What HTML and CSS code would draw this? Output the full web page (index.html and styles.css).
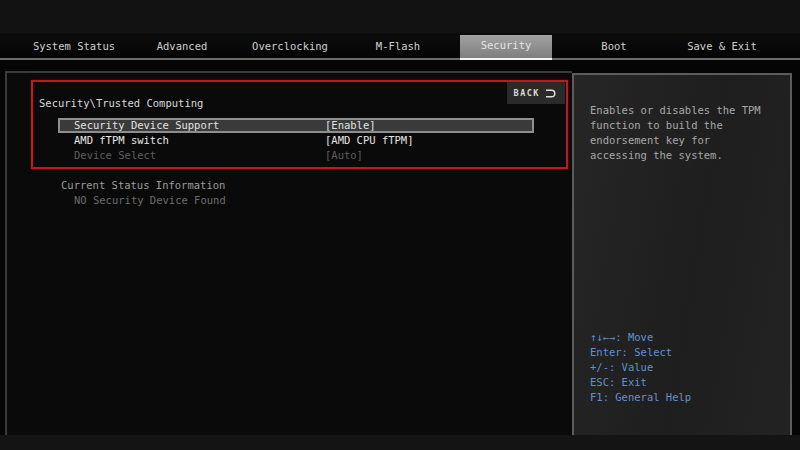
FILE: index.html
```html
<!DOCTYPE html>
<html lang="en">
<head>
  <meta charset="UTF-8">
  <meta name="viewport" content="width=device-width, initial-scale=1.0">
  <title>BIOS - Security</title>
  <link rel="stylesheet" href="styles.css">
</head>
<body>
  <div class="top-space"></div>

  <!-- Menu tabs -->
  <div class="tabs">
    <div class="tab">System Status</div>
    <div class="tab">Advanced</div>
    <div class="tab">Overclocking</div>
    <div class="tab">M-Flash</div>
    <div class="tab active">Security</div>
    <div class="tab">Boot</div>
    <div class="tab">Save &amp; Exit</div>
  </div>

  <div class="main">
    <!-- Settings panel -->
    <div class="panel">
      <div class="red-box">
        <div class="box-head">
          <div class="crumb">Security\Trusted Computing</div>
          <div class="back">BACK
            <svg width="11" height="9" viewBox="0 0 11 9"><path d="M1 1.2 H6.5 A3.3 3.3 0 0 1 6.5 7.8 H1" fill="none" stroke="#dcdcdc" stroke-width="1.5"/></svg>
          </div>
        </div>
        <div class="rows">
          <div class="row selected"><span>Security Device Support</span><span>[Enable]</span></div>
          <div class="row"><span>AMD fTPM switch</span><span>[AMD CPU fTPM]</span></div>
          <div class="row disabled"><span>Device Select</span><span>[Auto]</span></div>
        </div>
      </div>
      <div class="status">
        <div class="status-title">Current Status Information</div>
        <div class="status-text">NO Security Device Found</div>
      </div>
    </div>

    <!-- Help panel -->
    <div class="help">
      <div class="help-text">
        Enables or disables the TPM<br>
        function to build the<br>
        endorsement key for<br>
        accessing the system.
      </div>
      <div class="keys">
        <div>↑↓←→: Move</div>
        <div>Enter: Select</div>
        <div>+/-: Value</div>
        <div>ESC: Exit</div>
        <div>F1: General Help</div>
      </div>
    </div>
  </div>

  <div class="bottom"></div>
</body>
</html>
```

FILE: styles.css
```css
body {
  margin: 0;
  width: 800px;
  height: 450px;
  overflow: hidden;
  background: #111;
  font-family: "DejaVu Sans Mono", "Liberation Mono", monospace;
  font-size: 10.5px;
  line-height: 15px;
  color: #d6d6d6;
}
.top-space {
  height: 33px;
  background: #121212;
}
.tabs {
  display: grid;
  grid-template-columns: repeat(7, 108px);
  height: 25px;
  padding-left: 20px;
  background: linear-gradient(#0c0c0c, #050505);
  border-bottom: 2px solid #6a6a6a;
}
.tab {
  justify-self: center;
  width: 92px;
  margin-top: 2px;
  line-height: 23px;
  text-align: center;
  color: #cfcfcf;
}
.tab.active {
  color: #e4e4e4;
  background: linear-gradient(#a2a2a2, #7e7e7e);
  border-bottom: 2px solid #f4f4f4;
  margin-bottom: -2px;
  line-height: 21px;
}
.main {
  display: flex;
  height: 375px;
  padding-top: 11px;
  box-sizing: border-box;
  background: #050505;
}
.panel {
  flex: 1;
  margin-left: 5px;
  border-top: 2px solid #3a3a3a;
  border-left: 2px solid #3a3a3a;
  background: #0a0a0a;
}
.red-box {
  height: 85px;
  margin: 7px 4px 0 24px;
  border: 2px solid #c4161c;
  box-shadow: 0 0 2px #7a0d10;
}
.box-head {
  display: flex;
  justify-content: space-between;
  align-items: flex-start;
}
.crumb {
  margin: 14px 0 0 6px;
  color: #d8d8d8;
}
.back {
  display: flex;
  align-items: center;
  gap: 5px;
  height: 22px;
  padding: 0 9px 0 7px;
  margin-right: 1px;
  background: #2a2a2a;
  color: #dcdcdc;
  font-size: 8.5px;
  font-weight: bold;
  letter-spacing: 1.5px;
}
.rows {
  width: 476px;
  margin: 7px 0 0 25px;
}
.row {
  display: grid;
  grid-template-columns: 251px 1fr;
  padding-left: 16px;
  height: 15px;
  color: #e6e6e6;
}
.row.selected {
  background: #3a3a3a;
  box-shadow: inset 0 0 0 2px #8e8e8e;
  color: #e2e2e2;
}
.row.disabled {
  color: #5e5e5e;
}
.status {
  margin-top: 9px;
  padding-left: 54px;
}
.status-title {
  color: #9c9c9c;
}
.status-text {
  padding-left: 13px;
  color: #6c6c6c;
}
.help {
  display: flex;
  flex-direction: column;
  width: 220px;
  margin: 2px 8px 0 0;
  padding: 28px 0 30px 16px;
  box-sizing: border-box;
  border: 2px solid #5c5c5c;
  border-bottom: none;
  background: linear-gradient(100deg, #262626, #1e1e1e 55%, #232323);
  color: #a8a8a8;
}
.keys {
  margin-top: auto;
  color: #5e92d6;
}
.bottom {
  height: 15px;
  background: #141414;
}
```
